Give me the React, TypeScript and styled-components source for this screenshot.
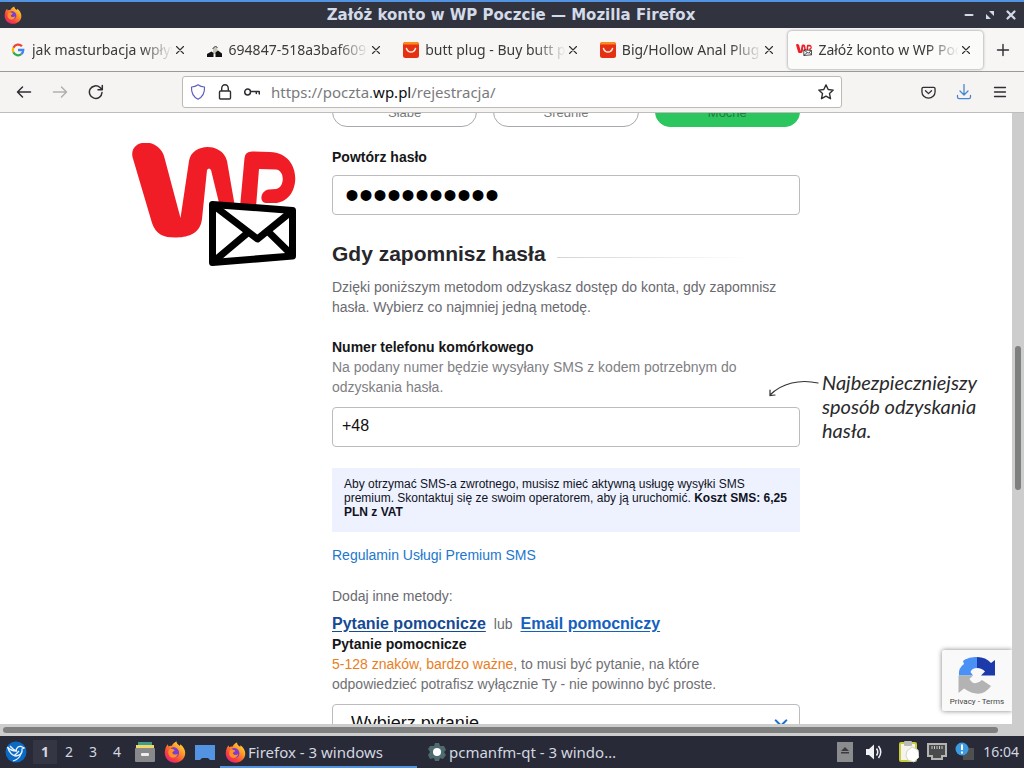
import React from "react";
import styled, { createGlobalStyle, css } from "styled-components";

const GlobalStyle = createGlobalStyle`
  *, *::before, *::after { box-sizing: border-box; }
  html, body { margin: 0; padding: 0; }
  body { background: #fff; font-family: "Liberation Sans", Arial, sans-serif; font-size: 14px; line-height: 20px; }
  button, input, select { font: inherit; }
  svg { display: block; flex: none; }
`;

const uiFont = `"Noto Sans", sans-serif`;

/* ---------- desktop and browser window ---------- */

const Desktop = styled.div`
  display: flex;
  flex-direction: column;
  height: 100vh;
  overflow: hidden;
`;

const TitleBar = styled.header`
  display: grid;
  grid-template-columns: 80px 1fr 80px;
  align-items: center;
  height: 28px;
  flex: none;
  padding: 0 6px 0 4px;
  border-top: 2px solid #5294e2;
  background: #31333f;
`;

const WindowTitle = styled.h1`
  margin: 0;
  color: #d3dae8;
  font: bold 15px/26px "DejaVu Sans", sans-serif;
  text-align: center;
  white-space: nowrap;
`;

const WindowButtons = styled.div`
  display: flex;
  justify-content: flex-end;
  gap: 7px;
`;

const IconButton = styled.button<{ $size?: number }>`
  display: flex;
  align-items: center;
  justify-content: center;
  flex: none;
  width: ${({ $size = 28 }) => $size}px;
  height: ${({ $size = 28 }) => $size}px;
  padding: 0;
  border: 0;
  background: none;
  color: #2e2e33;
`;

const TabStrip = styled.nav`
  display: flex;
  align-items: center;
  gap: 2px;
  height: 44px;
  flex: none;
  padding: 0 7px 0 2px;
  border-bottom: 1px solid #9b9b97;
  background: #f7f6f5;
`;

const Tab = styled.div<{ $active?: boolean }>`
  display: flex;
  align-items: center;
  flex: 1 1 0;
  min-width: 0;
  height: 38px;
  padding: 0 10px 0 8px;
  border-radius: 4px;
  ${({ $active }) =>
    $active &&
    css`
      background: #fbfbfa;
      box-shadow: 0 0 3px #85858c;
    `}
`;

const TabLabel = styled.span`
  flex: 1;
  min-width: 0;
  margin-left: 6px;
  overflow: hidden;
  color: #3a3a3a;
  font: 14px/22px ${uiFont};
  white-space: nowrap;
  mask-image: linear-gradient(to left, transparent, #000 32px);
`;

const NewTabButton = styled(IconButton)`
  margin-left: 4px;
`;

const NavBar = styled.div`
  display: grid;
  grid-template-columns: minmax(120px, 1fr) minmax(0, 660px) minmax(120px, 1fr);
  align-items: center;
  height: 41px;
  flex: none;
  border-bottom: 1px solid #bdbdbb;
  background: #f5f4f3;
`;

const NavGroup = styled.div<{ $end?: boolean }>`
  display: flex;
  gap: 8px;
  padding: 0 10px;
  justify-content: ${({ $end }) => ($end ? "flex-end" : "flex-start")};
`;

const UrlBar = styled.div`
  display: flex;
  align-items: center;
  gap: 11px;
  height: 32px;
  padding: 0 6px 0 7px;
  border: 1px solid #bdb9b3;
  border-radius: 3px;
  background: #fff;
`;

const UrlText = styled.span`
  flex: 1;
  color: #7a7a7d;
  font: 15px/22px ${uiFont};
  white-space: nowrap;
  b { color: #0c0c0d; font-weight: normal; }
`;

/* ---------- page ---------- */

const Viewport = styled.div`
  position: relative;
  display: flex;
  flex: 1;
  min-height: 0;
`;

const Page = styled.main`
  position: relative;
  flex: 1;
  min-width: 0;
  overflow: hidden;
  background: #fff;
`;

const Container = styled.div`
  display: grid;
  grid-template-columns: 200px minmax(0, 468px);
  max-width: 748px;
  margin: 0 auto;
`;

const LogoColumn = styled.div`
  padding-top: 30px;
`;

const Form = styled.form`
  display: flex;
  flex-direction: column;
  margin-top: -16px;
`;

const StrengthRow = styled.div`
  display: grid;
  grid-template-columns: repeat(3, 1fr);
  gap: 16px;
  margin-bottom: 20px;
`;

const Strength = styled.span<{ $on?: boolean }>`
  height: 30px;
  border: 1px solid ${({ $on }) => ($on ? "#2cc65f" : "#a9a9ad")};
  border-radius: 15px;
  background: ${({ $on }) => ($on ? "#2cc65f" : "#fff")};
  color: ${({ $on }) => ($on ? "#237a41" : "#77777a")};
  font-size: 13px;
  line-height: 30px;
  text-align: center;
`;

const Label = styled.label`
  color: #161618;
  font-weight: bold;
`;

const Field = styled.input`
  width: 100%;
  height: 40px;
  padding: 0 9px 2px;
  border: 1px solid #bcbcc0;
  border-radius: 4px;
  background: #fff;
  color: #111;
  font-size: 16px;
`;

const PasswordField = styled(Field)`
  margin: 8px 0 27px;
  padding: 0 12px;
  color: #000;
  font-size: 40px;
`;

const SectionTitle = styled.h2`
  display: flex;
  align-items: center;
  gap: 11px;
  margin: 0 0 11px;
  color: #27272b;
  font-size: 21px;
  line-height: 24px;
  &::after {
    content: "";
    flex: 1;
    height: 1px;
    margin-top: 6px;
    background: linear-gradient(to right, #d4d4d8, #fff 80%);
  }
`;

const Text = styled.p<{ $tone?: string }>`
  margin: 0;
  max-width: 450px;
  color: ${({ $tone }) => $tone ?? "#6a6a70"};
`;

const Intro = styled(Text)`
  margin-bottom: 20px;
`;

const Hint = styled(Text)`
  max-width: 420px;
  margin-bottom: 10px;
`;

const Warn = styled.span`
  color: #e87e1c;
`;

const FieldWrap = styled.div`
  position: relative;
  margin-bottom: 21px;
`;

const SideNote = styled.aside`
  position: absolute;
  top: -37px;
  left: calc(100% - 32px);
  display: flex;
  gap: 1px;
`;

const NoteText = styled.p`
  width: 176px;
  margin: 0 0 0 1px;
  color: #2a2a2c;
  font: italic 20px/24px Lato, sans-serif;
`;

const Notice = styled.div`
  min-height: 64px;
  margin-bottom: 13px;
  padding: 9px 12px;
  background: #eef2fe;
  color: #10131f;
  font-size: 12px;
  line-height: 14px;
`;

const TermsLink = styled.a`
  align-self: flex-start;
  margin-bottom: 21px;
  color: #2277cc;
  text-decoration: none;
`;

const Methods = styled.div`
  display: flex;
  align-items: baseline;
  gap: 8px;
  margin-top: 8px;
  color: #6a6a70;
`;

const MethodLink = styled.a<{ $current?: boolean }>`
  color: ${({ $current }) => ($current ? "#154a94" : "#1460c0")};
  font-size: 16px;
  font-weight: bold;
  text-underline-offset: 2px;
`;

const SelectWrap = styled.div`
  position: relative;
  svg { position: absolute; right: 12px; top: 12px; pointer-events: none; }
`;

const Select = styled.select`
  appearance: none;
  width: 100%;
  height: 40px;
  padding: 0 36px 2px 18px;
  border: 1px solid #bcbcc0;
  border-radius: 4px;
  background: #fff;
  color: #111;
  font-size: 18px;
`;

const Captcha = styled.aside`
  position: absolute;
  right: 0;
  bottom: 13px;
  display: flex;
  flex-direction: column;
  align-items: center;
  width: 70px;
  padding: 6px 0 3px;
  border-radius: 2px 0 0 2px;
  background: #f9f9f9;
  box-shadow: 0 0 5px #808080;
  color: #444;
  font: 8px/12px Roboto, sans-serif;
  white-space: nowrap;
  a { color: inherit; text-decoration: none; }
`;

const ScrollTrack = styled.div<{ $horizontal?: boolean }>`
  display: flex;
  flex: none;
  background: #cdcdcd;
  ${({ $horizontal }) =>
    $horizontal
      ? css`height: 12px; padding: 3px 26px 3px 3px;`
      : css`width: 12px; flex-direction: column; padding: 0 3px;`}
`;

const ScrollSpace = styled.div<{ $grow: number }>`
  flex: ${({ $grow }) => $grow} 0 0;
`;

const ScrollThumb = styled(ScrollSpace)`
  border-radius: 3px;
  background: #7e8080;
`;

/* ---------- taskbar ---------- */

const TaskBar = styled.footer`
  display: flex;
  align-items: center;
  height: 32px;
  flex: none;
  padding: 0 5px;
  background: #282a37;
  color: #d3d7e0;
  font: 14px/20px ${uiFont};
`;

const Workspaces = styled.div`
  display: flex;
  margin: 0 6px;
`;

const Workspace = styled.button<{ $active?: boolean }>`
  width: 24px;
  height: 24px;
  padding: 0;
  border: 0;
  background: ${({ $active }) => ($active ? "#343644" : "transparent")};
  color: inherit;
  font-weight: ${({ $active }) => ($active ? "bold" : "normal")};
`;

const Launchers = styled.div`
  display: flex;
  align-items: center;
  gap: 9px;
  margin-right: 5px;
`;

const Task = styled.button<{ $active?: boolean }>`
  display: flex;
  align-items: center;
  gap: 2px;
  width: 197px;
  height: 32px;
  margin-right: 5px;
  padding: 2px 5px 0;
  border: 0;
  border-bottom: 2px solid ${({ $active }) => ($active ? "#5294e2" : "transparent")};
  background: none;
  color: inherit;
  font-size: 15px;
  text-align: left;
  white-space: nowrap;
`;

const Tray = styled.div`
  display: flex;
  align-items: center;
  gap: 8px;
  margin-left: auto;
`;

const TrayControls = styled.div`
  display: flex;
  align-items: center;
  gap: 12px;
  margin-right: 8px;
`;

/* ---------- drawings ---------- */

const FirefoxIcon = ({ size = 18 }: { size?: number }) => (
  <svg width={size} height={size} viewBox="0 0 20 20" aria-hidden="true">
    <defs>
      <linearGradient id="fx" x1="1" y1="0" x2="0.2" y2="1">
        <stop offset="0" stopColor="#fff24a" />
        <stop offset="0.4" stopColor="#ff9a27" />
        <stop offset="0.75" stopColor="#f9403c" />
        <stop offset="1" stopColor="#e0218a" />
      </linearGradient>
    </defs>
    <path d="M1 8C1.500 5.500 2.500 4 3.500 3L4 5C5 4.300 6 4.300 7 4.500C8 2.500 10 1 11.500 0.500C11.300 2.500 13 3.500 14.500 4.500L14.800 3C17.500 5 19.300 8 19.300 11C19.300 16 15 19.800 10 19.800C5 19.800 0.700 16 0.700 10.700Z" fill="url(#fx)" />
    <path d="M6 7C8 5 11 5.500 12.500 7.500C15 10.500 13.500 15 9.800 15C6.500 15 5 12.500 5 10.500L8 10L9.500 8.500Z" fill="#7a3fd0" />
    <path d="M5 7.500C6.500 6.500 8 7.300 9.800 8.300C8.800 9.500 7.500 9.500 7.500 10.700C8.500 13 11 12.500 12.500 11.500C12 15 8 16.500 5.300 14C3.500 12.500 3.500 9 5 7.500Z" fill="#ff9226" />
  </svg>
);

const GoogleIcon = () => (
  <svg width="16" height="14" viewBox="0 0 16 16" aria-hidden="true">
    <g fill="none" strokeWidth="2.600">
      <path d="M12.500 3.800A6 6 0 0 0 2.700 5.300" stroke="#ea4335" />
      <path d="M2.700 5.300A6 6 0 0 0 2.700 10.700" stroke="#fbbc05" />
      <path d="M2.700 10.700A6 6 0 0 0 11.800 12.700" stroke="#34a853" />
      <path d="M8 8H14A6 6 0 0 1 11.800 12.700" stroke="#4285f4" />
    </g>
  </svg>
);

const PhotoIcon = () => (
  <svg width="16" height="16" viewBox="0 0 16 16" aria-hidden="true">
    <path d="M6 5L10 4L11 12H6Z" fill="#c5c8b8" />
    <path d="M0 15V12L4.500 9.500L6.500 11V15ZM8.500 15V10.500L11 8.500L15 11.500V15Z" fill="#111" />
    <path d="M5.500 7L8.500 4L10.500 6" stroke="#444" fill="none" />
  </svg>
);

const AliIcon = () => (
  <svg width="16" height="16" viewBox="0 0 16 16" aria-hidden="true">
    <rect width="16" height="16" rx="2.500" fill="#e43113" />
    <path d="M0 2.500A2.500 2.500 0 0 1 2.500 0H13.500A2.500 2.500 0 0 1 16 2.500Z" fill="#fb8c1a" />
    <path d="M3.500 6.500C5 11.300 11 11.300 12.500 6.500" fill="none" stroke="#ffe9da" strokeWidth="1.500" strokeLinecap="round" />
  </svg>
);

const WpLogo = ({ width = 165 }: { width?: number }) => (
  <svg width={width} height={Math.round((width * 125) / 165)} viewBox="0 0 165 125" role="img" aria-label="WP Poczta">
    <path d="M0.500 14C-3 -4 26 -6 32 13L48.500 75L57 18C60 0 90 -1 95 18L103 64H88L79 27Q77 24 75 27L70 76C68 92 54 94.500 43 94.500C32 94.500 24 92 20 80Z" fill="#f01d26" />
    <path d="M108 64L112.500 15Q113 8.500 120 8.500L138 9C172 10 170 60 142 60H134C127 60 128 47.500 137 46.500L144 46C153 44 153 27.500 144 26.500L127 26L124 64Z" fill="#f01d26" />
    <path d="M80.500 61.500L160.500 67.500V113L80.500 119.500Z" fill="#fff" stroke="#000" strokeWidth="7" strokeLinejoin="round" />
    <path d="M81 62L125.500 96L160 68M81 119L115.500 90M135.500 88L160 112" fill="none" stroke="#000" strokeWidth="7" strokeLinejoin="round" />
  </svg>
);

type StrokeIconProps = { d: string; size?: number; width?: number; color?: string };
const StrokeIcon = ({ d, size = 16, width = 1.5, color = "currentColor" }: StrokeIconProps) => (
  <svg width={size} height={size} viewBox="0 0 16 16" fill="none" stroke={color} strokeWidth={width} strokeLinecap="round" strokeLinejoin="round" aria-hidden="true">
    <path d={d} />
  </svg>
);

const icons = {
  close: "M4 4L12 12M12 4L4 12",
  plus: "M8 2.500V13.500M2.500 8H13.500",
  back: "M14.500 8H1.500M6.500 3L1.500 8L6.500 13",
  forward: "M1.500 8H14.500M9.500 3L14.500 8L9.500 13",
  reload: "M14 8.500A6.300 6.300 0 1 1 12 3.500L14 5.500M14.300 1.500V5.700H10",
  shield: "M8 0.800C10 2.300 12 2.900 14.500 3C14.800 8.500 12.500 13 8 15.200C3.500 13 1.200 8.500 1.500 3C4 2.900 6 2.300 8 0.800Z",
  lock: "M3.500 7H12.500Q13.500 7 13.500 8V14Q13.500 15 12.500 15H3.500Q2.500 15 2.500 14V8Q2.500 7 3.500 7ZM4.700 7V4.500A3.300 3.800 0 0 1 11.300 4.500V7",
  key: "M6.500 8A2.900 2.900 0 1 1 0.700 8A2.900 2.900 0 1 1 6.500 8ZM6.500 7.500H15.300V10M12.300 7.500V9.500",
  star: "M8 0.900L10.200 5.500L15.200 6.100L11.500 9.600L12.500 14.700L8 12.200L3.500 14.700L4.500 9.600L0.800 6.100L5.800 5.500Z",
  pocket: "M2.500 2.500H13.500Q15 2.500 15 4V7.500A7 6.500 0 0 1 1 7.500V4Q1 2.500 2.500 2.500ZM4.800 6.200L8 9.200L11.200 6.200",
  download: "M8 0.500V10.500M4 7L8 11L12 7M1.500 11.500V13Q1.500 14.700 3.200 14.700H12.800Q14.500 14.700 14.500 13V11.500",
  menu: "M2.500 3.500H13.500M2.500 8H13.500M2.500 12.500H13.500",
  chevron: "M2 5L8 11L14 5",
};

const ArrowDrawing = () => (
  <svg width="52" height="28" viewBox="0 0 52 28" fill="none" stroke="#333" strokeWidth="1.200" strokeLinecap="round" aria-hidden="true">
    <path d="M50 13C32 9 14 13 2 25M2 20V25.500L7 25" />
  </svg>
);

const RecaptchaIcon = () => (
  <svg width="40" height="40" viewBox="0 0 40 40" aria-hidden="true">
    <path d="M6 5L8 3.500Q13 0.500 20 1V12Q15 12 13.500 16L16 19.500H2Q1 12 7 8Z" fill="#4a90f5" />
    <path d="M20 1Q29 1 34 7L38 4V19.500H24L28 15.500Q25 12 20 12Z" fill="#1c3aa9" />
    <path d="M1.500 19.500H16L12.500 23Q17 31 25 24L34 30Q24 44 7 32.500L1.500 37Z" fill="#b3b3b3" />
  </svg>
);

const MenuBirdIcon = () => (
  <svg width="22" height="22" viewBox="0 0 22 22" aria-hidden="true">
    <circle cx="11" cy="11" r="10.500" fill="#0b6ac4" />
    <path d="M2.500 6Q6 10 11 10Q12 5 16 5.500L19 7L17 8Q18 14 11 15Q5 14 2.500 6Z" fill="none" stroke="#e9f3ff" strokeWidth="1.300" />
    <path d="M5 5Q8 9 12 10M9 15L14 10M8 20Q15 18 16 12" fill="none" stroke="#e9f3ff" strokeWidth="1.300" />
  </svg>
);

const FileCabinetIcon = () => (
  <svg width="20" height="20" viewBox="0 0 20 20" aria-hidden="true">
    <path d="M3 0H17V4H3Z" fill="#3f9d8f" />
    <path d="M1 3H19V7H1Z" fill="#f3d767" />
    <rect y="6" width="20" height="14" rx="1" fill="#88898b" />
    <rect x="6" y="11" width="8" height="3" rx="1" fill="#eee" />
  </svg>
);

const DesktopIcon = () => (
  <svg width="20" height="20" viewBox="0 0 20 20" aria-hidden="true">
    <path d="M0 3H20V18H15L13 16H7L5 18H0Z" fill="#5294e2" />
  </svg>
);

const GearIcon = () => (
  <svg width="20" height="20" viewBox="0 0 20 20" aria-hidden="true">
    <path d="M8 1H12L13 4L17 4L19 8L17 10L19 13L16 17L13 16L12 19H8L7 16L3 17L1 13L3 10L1 7L3 4L7 4Z" fill="#4f6a70" />
    <circle cx="10" cy="10" r="4" fill="#fff" />
  </svg>
);

const EjectIcon = () => (
  <svg width="16" height="20" viewBox="0 0 16 20" aria-hidden="true">
    <rect width="16" height="20" fill="#8b8c8e" />
    <path d="M4 9L8 5L12 9ZM4 10H12V11.500H4Z" fill="#3b3c40" />
  </svg>
);

const SpeakerIcon = () => (
  <svg width="18" height="18" viewBox="0 0 18 18" aria-hidden="true">
    <path d="M1 6H4L9 1.500V16.500L4 12H1Z" fill="#f0f1f4" />
    <path d="M11.500 5.500Q14 9 11.500 12.500M13.500 3Q18 9 13.500 15" fill="none" stroke="#f0f1f4" strokeWidth="1.500" />
  </svg>
);

const ClipboardIcon = () => (
  <svg width="20" height="22" viewBox="0 0 20 22" aria-hidden="true">
    <rect x="1" y="2" width="16" height="18" rx="1" fill="#f4f4ec" stroke="#c9cc3c" strokeWidth="2" />
    <rect x="5" y="0" width="8" height="5" rx="1" fill="#b9bbb4" />
    <path d="M8 10L13 6L19 9L20 16L15 21L9 19L7 15Z" fill="#fff" stroke="#d5d5cf" />
  </svg>
);

const NetworkIcon = () => (
  <svg width="20" height="18" viewBox="0 0 20 18" aria-hidden="true">
    <path d="M1 1H19V13H15V16H5V13H1Z" fill="#4a4b4d" stroke="#b3b3b0" strokeWidth="2" />
    <path d="M5 3V6M7.500 3V6M10 3V6M12.500 3V6M15 3V6" stroke="#c9c9c4" />
  </svg>
);

const AlertIcon = () => (
  <svg width="20" height="20" viewBox="0 0 20 20" aria-hidden="true">
    <rect x="8" y="6" width="11" height="12" fill="#4f5050" />
    <circle cx="7" cy="7" r="6.500" fill="#3b9ae0" />
    <path d="M7 2.500V8M7 9.500V11.500" stroke="#fff" strokeWidth="2" />
  </svg>
);

/* ---------- data ---------- */

const tabs = [
  { title: "jak masturbacja wpływa", icon: <GoogleIcon /> },
  { title: "694847-518a3baf6091", icon: <PhotoIcon /> },
  { title: "butt plug - Buy butt plug", icon: <AliIcon /> },
  { title: "Big/Hollow Anal Plug", icon: <AliIcon /> },
  { title: "Załóż konto w WP Poczcie", icon: <WpLogo width={16} />, active: true },
];

export default function App() {
  return (
    <>
      <GlobalStyle />
      <Desktop>
        <TitleBar>
          <FirefoxIcon />
          <WindowTitle>Załóż konto w WP Poczcie — Mozilla Firefox</WindowTitle>
          <WindowButtons>
            <IconButton $size={14} aria-label="Minimalizuj"><StrokeIcon d="M4 8H12" size={14} width={2.4} color="#d3dae8" /></IconButton>
            <IconButton $size={14} aria-label="Przywróć">
              <svg width="14" height="14" viewBox="0 0 14 14" fill="#d3dae8"><path d="M6 3H11V8ZM3 6V11H8Z" /></svg>
            </IconButton>
            <IconButton $size={14} aria-label="Zamknij"><StrokeIcon d="M4 4L12 12M12 4L4 12" size={14} width={2.6} color="#d3dae8" /></IconButton>
          </WindowButtons>
        </TitleBar>

        <TabStrip>
          {tabs.map((t) => (
            <Tab key={t.title} $active={t.active}>
              {t.icon}
              <TabLabel>{t.title}</TabLabel>
              <IconButton $size={14} aria-label="Zamknij kartę"><StrokeIcon d={icons.close} size={14} width={1.3} /></IconButton>
            </Tab>
          ))}
          <NewTabButton aria-label="Nowa karta"><StrokeIcon d={icons.plus} width={1.4} /></NewTabButton>
        </TabStrip>

        <NavBar>
          <NavGroup>
            <IconButton aria-label="Wstecz"><StrokeIcon d={icons.back} /></IconButton>
            <IconButton aria-label="Dalej"><StrokeIcon d={icons.forward} color="#b0b0b2" /></IconButton>
            <IconButton aria-label="Odśwież"><StrokeIcon d={icons.reload} /></IconButton>
          </NavGroup>
          <UrlBar>
            <StrokeIcon d={icons.shield} width={1.2} color="#5d5fc4" />
            <StrokeIcon d={icons.lock} width={1.4} color="#2e2e33" />
            <StrokeIcon d={icons.key} width={1.5} color="#2e2e33" />
            <UrlText>https://poczta.<b>wp.pl</b>/rejestracja/</UrlText>
            <IconButton $size={18} aria-label="Dodaj zakładkę"><StrokeIcon d={icons.star} width={1.4} /></IconButton>
          </UrlBar>
          <NavGroup $end>
            <IconButton aria-label="Pocket"><StrokeIcon d={icons.pocket} size={15} width={1.4} /></IconButton>
            <IconButton aria-label="Pobrane"><StrokeIcon d={icons.download} width={1.3} color="#4a86cf" /></IconButton>
            <IconButton aria-label="Menu"><StrokeIcon d={icons.menu} width={1.3} /></IconButton>
          </NavGroup>
        </NavBar>

        <Viewport>
          <Page>
            <Container>
              <LogoColumn><WpLogo /></LogoColumn>
              <Form>
                <StrengthRow>
                  <Strength>Słabe</Strength>
                  <Strength>Średnie</Strength>
                  <Strength $on>Mocne</Strength>
                </StrengthRow>
                <Label htmlFor="repeat">Powtórz hasło</Label>
                <PasswordField id="repeat" type="password" defaultValue="aaaaaaaaaaa" />

                <SectionTitle>Gdy zapomnisz hasła</SectionTitle>
                <Intro>Dzięki poniższym metodom odzyskasz dostęp do konta, gdy zapomnisz hasła. Wybierz co najmniej jedną metodę.</Intro>

                <Label htmlFor="phone">Numer telefonu komórkowego</Label>
                <Hint $tone="#808084">Na podany numer będzie wysyłany SMS z kodem potrzebnym do odzyskania hasła.</Hint>
                <FieldWrap>
                  <Field id="phone" type="tel" defaultValue="+48" />
                  <SideNote>
                    <ArrowDrawing />
                    <NoteText>Najbezpieczniejszy sposób odzyskania hasła.</NoteText>
                  </SideNote>
                </FieldWrap>

                <Notice>
                  Aby otrzymać SMS-a zwrotnego, musisz mieć aktywną usługę wysyłki SMS premium. Skontaktuj się ze swoim operatorem, aby ją uruchomić. <b>Koszt SMS: 6,25 PLN z VAT</b>
                </Notice>
                <TermsLink href="#regulamin">Regulamin Usługi Premium SMS</TermsLink>

                <Text>Dodaj inne metody:</Text>
                <Methods>
                  <MethodLink href="#pytanie" $current>Pytanie pomocnicze</MethodLink>
                  <span>lub</span>
                  <MethodLink href="#email">Email pomocniczy</MethodLink>
                </Methods>
                <Label htmlFor="question">Pytanie pomocnicze</Label>
                <Hint $tone="#707074"><Warn>5-128 znaków, bardzo ważne</Warn>, to musi być pytanie, na które odpowiedzieć potrafisz wyłącznie Ty - nie powinno być proste.</Hint>
                <SelectWrap>
                  <Select id="question" defaultValue="">
                    <option value="">Wybierz pytanie</option>
                  </Select>
                  <StrokeIcon d={icons.chevron} size={14} width={2.4} color="#1f70c8" />
                </SelectWrap>
              </Form>
            </Container>
            <Captcha>
              <RecaptchaIcon />
              <span><a href="#privacy">Privacy</a> - <a href="#terms">Terms</a></span>
            </Captcha>
          </Page>
          <ScrollTrack>
            <ScrollSpace $grow={233} />
            <ScrollThumb $grow={144} />
            <ScrollSpace $grow={234} />
          </ScrollTrack>
        </Viewport>
        <ScrollTrack $horizontal><ScrollThumb $grow={1} /></ScrollTrack>

        <TaskBar>
          <MenuBirdIcon />
          <Workspaces>
            {["1", "2", "3", "4"].map((n) => (
              <Workspace key={n} $active={n === "1"}>{n}</Workspace>
            ))}
          </Workspaces>
          <Launchers>
            <FileCabinetIcon />
            <FirefoxIcon size={22} />
            <DesktopIcon />
          </Launchers>
          <Task $active><FirefoxIcon size={21} />Firefox - 3 windows</Task>
          <Task><GearIcon />pcmanfm-qt - 3 windo…</Task>
          <Tray>
            <TrayControls>
              <EjectIcon />
              <SpeakerIcon />
            </TrayControls>
            <ClipboardIcon />
            <NetworkIcon />
            <AlertIcon />
            <time>16:04</time>
          </Tray>
        </TaskBar>
      </Desktop>
    </>
  );
}
